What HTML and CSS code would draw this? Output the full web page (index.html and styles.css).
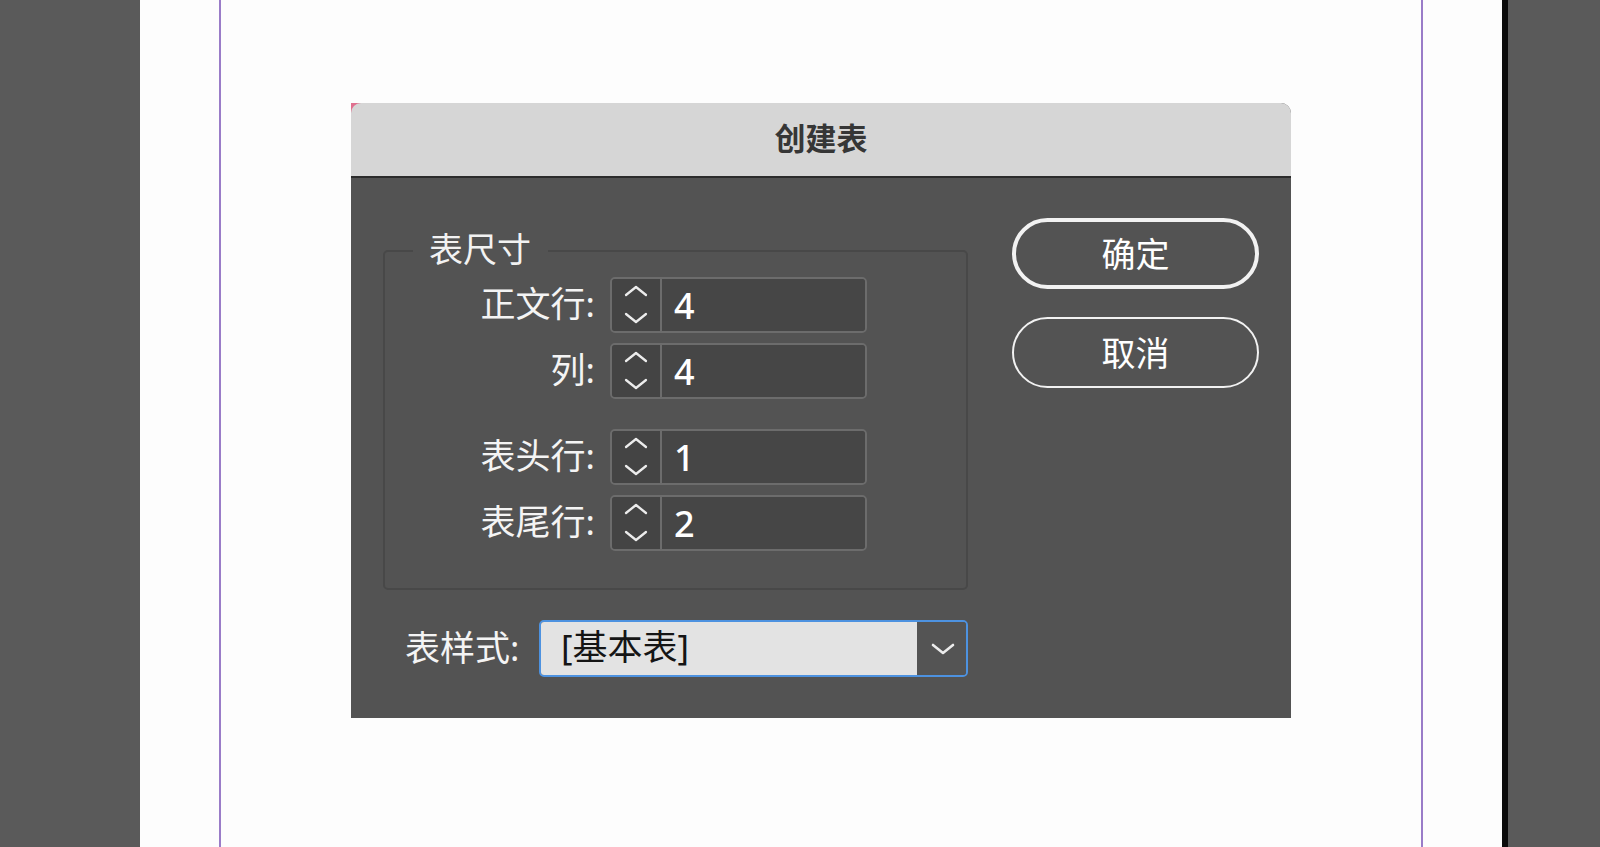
FILE: index.html
```html
<!DOCTYPE html>
<html lang="zh-CN">
<head>
<meta charset="utf-8">
<title>创建表</title>
<link rel="stylesheet" href="styles.css">
</head>
<body>
<div class="screen">
  <div class="side side-left"></div>
  <div class="page">
    <div class="guide">
      <div class="dialog">
        <div class="corner-pink"></div>
        <div class="titlebar">创建表</div>
        <div class="dialog-body">
          <div class="left-col">
            <div class="fieldset">
              <div class="legend">表尺寸</div>
              <div class="row">
                <div class="label">正文行:</div>
                <div class="spinner">
                  <div class="stepper">
                    <svg viewBox="0 0 48 51" width="48" height="51"><polyline points="14,16 24,8 34,16"/><polyline points="14,35 24,43 34,35"/></svg>
                  </div>
                  <div class="value">4</div>
                </div>
              </div>
              <div class="row">
                <div class="label">列:</div>
                <div class="spinner">
                  <div class="stepper">
                    <svg viewBox="0 0 48 51" width="48" height="51"><polyline points="14,16 24,8 34,16"/><polyline points="14,35 24,43 34,35"/></svg>
                  </div>
                  <div class="value">4</div>
                </div>
              </div>
              <div class="row row-gap">
                <div class="label">表头行:</div>
                <div class="spinner">
                  <div class="stepper">
                    <svg viewBox="0 0 48 51" width="48" height="51"><polyline points="14,16 24,8 34,16"/><polyline points="14,35 24,43 34,35"/></svg>
                  </div>
                  <div class="value">1</div>
                </div>
              </div>
              <div class="row">
                <div class="label">表尾行:</div>
                <div class="spinner">
                  <div class="stepper">
                    <svg viewBox="0 0 48 51" width="48" height="51"><polyline points="14,16 24,8 34,16"/><polyline points="14,35 24,43 34,35"/></svg>
                  </div>
                  <div class="value">2</div>
                </div>
              </div>
            </div>
            <div class="style-row">
              <div class="style-label">表样式:</div>
              <div class="select">
                <div class="select-text">[基本表]</div>
                <div class="select-arrow">
                  <svg viewBox="0 0 49 52" width="49" height="52"><polyline points="16,23 26,31 36,23"/></svg>
                </div>
              </div>
            </div>
          </div>
          <div class="buttons">
            <div class="btn btn-default">确定</div>
            <div class="btn">取消</div>
          </div>
        </div>
      </div>
    </div>
  </div>
  <div class="page-edge"></div>
  <div class="side side-right"></div>
</div>
</body>
</html>
```

FILE: styles.css
```css
* { box-sizing: border-box; }
html, body { margin: 0; padding: 0; }
body {
  width: 1600px;
  height: 847px;
  overflow: hidden;
  font-family: "Noto Sans", "Noto Sans CJK SC", sans-serif;
  background: #5a5a5a;
}
.screen {
  display: flex;
  width: 1600px;
  height: 847px;
}
.side { background: #5a5a5a; height: 100%; }
.side-left { width: 140px; }
.side-right { width: 92px; }
.page-edge { width: 6px; background: #0c0c0c; height: 100%; }
.page {
  width: 1362px;
  height: 100%;
  background: #fdfdfd;
  padding-left: 79px;
}
.guide {
  width: 1204px;
  height: 100%;
  border-left: 2px solid #9a7cc8;
  border-right: 2px solid #9a7cc8;
  padding-top: 103px;
  padding-left: 130px;
}
.dialog {
  position: relative;
  width: 940px;
  height: 615px;
  background: #535353;
  border-radius: 10px 10px 0 0;
}
.corner-pink {
  position: absolute;
  left: 0;
  top: 0;
  width: 12px;
  height: 10px;
  background: linear-gradient(135deg, #e0708f 0 45%, transparent 50%);
}
.titlebar {
  position: relative;
  height: 75px;
  background: #d6d6d6;
  border-bottom: 2px solid #2c2c2c;
  border-radius: 10px 10px 0 0;
  display: flex;
  align-items: center;
  justify-content: center;
  font-size: 31px;
  font-weight: 700;
  color: #363636;
  padding-bottom: 6px;
}
.dialog-body {
  display: flex;
  padding-left: 32px;
  gap: 44px;
}
.left-col {
  width: 585px;
  padding-top: 72px;
}
.fieldset {
  position: relative;
  width: 585px;
  height: 340px;
  border: 2px solid #484848;
  border-radius: 5px;
  padding-top: 25px;
}
.legend {
  position: absolute;
  left: 28px;
  top: -27px;
  padding: 0 17px 0 16px;
  background: #535353;
  color: #f2f2f2;
  font-size: 34px;
  line-height: 48px;
}
.row {
  display: flex;
  align-items: center;
  height: 55px;
  margin-bottom: 11px;
}
.row-gap { margin-top: 31px; }
.label {
  width: 210px;
  text-align: right;
  color: #f4f4f4;
  font-size: 35px;
  line-height: 1;
  margin-right: 15px;
  padding-bottom: 3px;
}
.spinner {
  display: flex;
  width: 257px;
  height: 56px;
  border: 2px solid #6c6c6c;
  border-radius: 5px;
  overflow: hidden;
}
.stepper {
  width: 50px;
  background: #444444;
  border-right: 2px solid #6c6c6c;
}
.stepper svg, .select-arrow svg { display: block; }
.stepper polyline, .select-arrow polyline {
  fill: none;
  stroke: #ececec;
  stroke-width: 2.3;
  stroke-linecap: round;
  stroke-linejoin: round;
}
.value {
  flex: 1;
  background: #464646;
  color: #ffffff;
  font-size: 36px;
  font-weight: 500;
  line-height: 54px;
  padding-left: 12px;
}
.style-row {
  display: flex;
  align-items: center;
  margin-top: 30px;
}
.style-label {
  margin-left: 22px;
  width: 118px;
  color: #f4f4f4;
  font-size: 35px;
  line-height: 1;
  margin-right: 16px;
  padding-bottom: 3px;
}
.select {
  display: flex;
  width: 429px;
  height: 57px;
  border: 2px solid #4d92e0;
  border-radius: 5px;
  overflow: hidden;
}
.select-text {
  width: 376px;
  background: #e3e3e3;
  color: #151515;
  font-size: 35px;
  line-height: 50px;
  padding-left: 20px;
}
.select-arrow {
  flex: 1;
  background: #545454;
}
.select-arrow polyline { stroke-width: 2.6; }
.buttons {
  display: flex;
  flex-direction: column;
  gap: 28px;
  padding-top: 40px;
}
.btn {
  width: 247px;
  height: 71px;
  border: 2px solid #f2f2f2;
  border-radius: 36px;
  display: flex;
  align-items: center;
  justify-content: center;
  color: #ffffff;
  font-size: 34px;
  padding-bottom: 2px;
}
.btn-default { border-width: 4px; }
```
